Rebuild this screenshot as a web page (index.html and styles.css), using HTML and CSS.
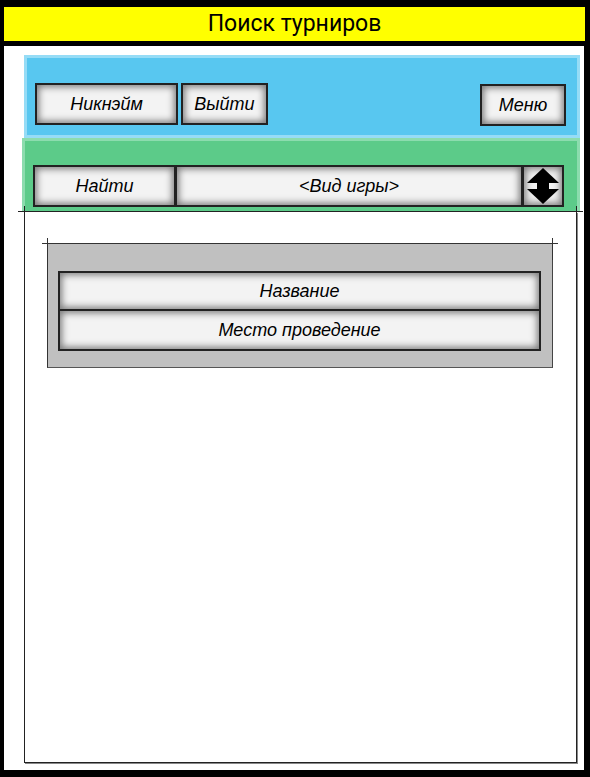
FILE: index.html
```html
<!DOCTYPE html>
<html lang="ru">
<head>
<meta charset="utf-8">
<title>Поиск турниров</title>
<link rel="stylesheet" href="styles.css">
</head>
<body>
<div class="frame">
  <header class="header">Поиск турниров</header>
  <main class="canvas">
    <section class="bar bar-blue">
      <div class="btn btn-nick">Никнэйм</div>
      <div class="btn btn-exit">Выйти</div>
      <div class="spacer"></div>
      <div class="btn btn-menu">Меню</div>
    </section>
    <section class="bar bar-green">
      <div class="btn btn-find">Найти</div>
      <div class="btn btn-combo">&lt;Вид игры&gt;</div>
      <div class="btn btn-spin">
        <svg viewBox="0 0 38 38" width="38" height="38" aria-hidden="true">
          <polygon points="19,1 35,16 3,16" fill="#000"/>
          <rect x="13" y="15" width="12" height="8" fill="#000"/>
          <polygon points="3,22 35,22 19,37" fill="#000"/>
        </svg>
      </div>
    </section>
    <section class="content">
      <div class="group">
        <div class="row row-first">Название</div>
        <div class="row row-second">Место проведение</div>
      </div>
    </section>
  </main>
</div>
</body>
</html>
```

FILE: styles.css
```css
* { box-sizing: border-box; }
html, body { margin: 0; padding: 0; }
body { background: #000; font-family: "Liberation Sans", Arial, sans-serif; }

.frame {
  width: 590px;
  height: 777px;
  background: #000;
  padding: 7px 6px 7px 4px;
  display: flex;
  flex-direction: column;
}

.header {
  height: 34px;
  width: 581px;
  background: #ffff00;
  color: #000;
  font-family: Roboto, "Liberation Sans", sans-serif;
  font-size: 23px;
  font-weight: 400;
  line-height: 34px;
  text-align: center;
}

.canvas {
  margin-top: 5px;
  width: 580px;
  height: 724px;
  background: #fff;
  display: flex;
  flex-direction: column;
  padding-top: 9px;
}

.bar {
  display: flex;
  align-items: flex-start;
}
.spacer { flex: 1; }

.bar-blue {
  margin-left: 20px;
  width: 556px;
  height: 83px;
  background: #58c7f0;
  border: 3px solid #96dcf6;
  padding: 25px 11px 0 8px;
  gap: 3px;
}

.bar-green {
  margin-left: 18px;
  width: 558px;
  height: 74px;
  background: #5ccb89;
  border: 3px solid #8cdcae;
  border-bottom: 0;
  padding: 24px 13px 0 8px;
  position: relative;
  z-index: 1;
}

.btn {
  height: 42px;
  border: 2px solid #222;
  background: #f3f3f3;
  box-shadow: inset 0 0 7px 2px #7a7a7a;
  display: flex;
  align-items: center;
  justify-content: center;
  font-style: italic;
  font-size: 18px;
  color: #000;
}
.btn-nick { width: 143px; }
.btn-exit { width: 87px; }
.btn-menu { width: 86px; margin-top: 1px; }
.btn-find { width: 143px; }
.btn-combo { width: 348px; margin-left: -1px; }
.btn-spin { width: 42px; margin-left: -1px; padding: 0; }
.btn-spin svg { display: block; flex: none; }

.content {
  position: relative;
  margin-left: 20px;
  width: 553px;
  height: 551px;
  border-left: 1px solid #222;
  border-right: 1px solid #222;
  border-bottom: 1px solid #222;
  box-shadow: 1px 1px 0 #888;
  padding: 31px 0 0 22px;
}
.content::before {
  content: "";
  position: absolute;
  left: -7px;
  right: -7px;
  top: -1px;
  height: 1px;
  background: #222;
  z-index: 2;
}
.content::after {
  content: "";
  position: absolute;
  left: -1px;
  right: -1px;
  top: -6px;
  height: 10px;
  border-left: 1px solid #222;
  border-right: 1px solid #222;
  z-index: 2;
}

.group {
  position: relative;
  width: 506px;
  height: 125px;
  background: #c0c0c0;
  border-top: 1px solid #333;
  border-left: 1px solid #333;
  border-right: 1px solid #444;
  border-bottom: 1px solid #555;
  padding: 27px 0 0 10px;
}
.group::before {
  content: "";
  position: absolute;
  left: -6px;
  right: -6px;
  top: -1px;
  height: 1px;
  background: #333;
}
.group::after {
  content: "";
  position: absolute;
  left: -1px;
  right: -1px;
  top: -6px;
  height: 22px;
  border-left: 1px solid #333;
  border-right: 1px solid #333;
}

.row {
  width: 483px;
  border: 2px solid #222;
  background: #f3f3f3;
  box-shadow: inset 0 0 7px 2px #7a7a7a;
  display: flex;
  align-items: center;
  justify-content: center;
  font-style: italic;
  font-size: 18px;
  color: #000;
}
.row-first { height: 40px; }
.row-second { height: 42px; margin-top: -2px; }
```
